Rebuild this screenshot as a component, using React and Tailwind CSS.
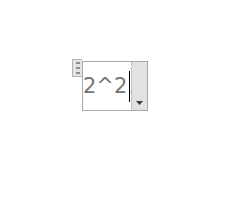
export default function App() {
  return (
    <div className="w-[236px] h-[217px] bg-white pt-[59px] pl-[72px]" style={{ fontFamily: '"DejaVu Sans", sans-serif' }}>
      <div className="flex items-start">
        {/* drag handle */}
        <div className="w-[10px] h-[18px] bg-[#e4e4e4] border border-r-0 border-[#b4b4b4] flex flex-col items-center justify-center gap-[3px]">
          <span className="w-[4px] h-[2px] bg-[#8c8c8c]" />
          <span className="w-[4px] h-[2px] bg-[#8c8c8c]" />
          <span className="w-[4px] h-[2px] bg-[#8c8c8c]" />
        </div>
        {/* input box */}
        <div className="mt-[2px] w-[66px] h-[50px] border border-[#a8a8a8] flex bg-white">
          <div className="relative flex-1 flex items-center">
            <span className="text-[21px] leading-[24px] text-[#757575]">2^2</span>
            <span className="ml-[2px] w-px h-[31px] bg-black" />
            <svg className="absolute left-[47px] top-[28px]" width="3" height="5" viewBox="0 0 3 5">
              <path d="M2.5 0.5 L0.5 2.5 L2.5 4.5" stroke="#b0b0b0" strokeWidth="1" fill="none" />
            </svg>
          </div>
          <div className="w-[16px] bg-[#e2e2e2] border-l border-[#c4c4c4] flex items-end justify-center pb-[5px]">
            <svg width="7" height="4" viewBox="0 0 7 4">
              <path d="M0 0 L7 0 L3.5 4 Z" fill="#3a3a3a" />
            </svg>
          </div>
        </div>
      </div>
    </div>
  )
}
